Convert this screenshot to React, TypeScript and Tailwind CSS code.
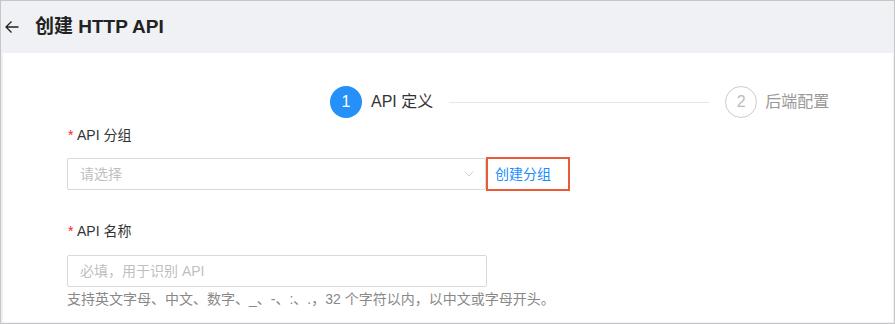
import { ChevronDown } from "lucide-react";

const FONT = { fontFamily: '"Liberation Sans","Noto Sans CJK SC",sans-serif' };

function StepDot({ n, active }: { n: number; active?: boolean }) {
  return (
    <div
      className={`w-8 h-8 rounded-full flex items-center justify-center text-[16px] ${
        active ? "bg-[#2590f8] text-white" : "border border-[#cccccc] text-[#bbbbbb]"
      }`}
    >
      {n}
    </div>
  );
}

function Label({ text }: { text: string }) {
  return (
    <div className="flex items-center h-5 text-[14px] text-[#333]">
      <span className="text-[#f5222d] w-[10px] pl-[1px]">*</span>
      <span>{text}</span>
    </div>
  );
}

export default function App() {
  return (
    <div
      className="w-[895px] h-[324px] border border-[#c6c6c6] bg-[#eff1f5] flex flex-col overflow-hidden"
      style={FONT}
    >
      {/* Header */}
      <div className="h-[52px] shrink-0 flex items-center pl-[4px]">
        <svg width="14" height="14" viewBox="0 0 14 14" fill="none" stroke="#222" strokeWidth="1.3">
          <path d="M13.5 7H1M6.5 1.5L1 7L6.5 12.5" />
        </svg>
        <h1 className="ml-[16px] text-[19px] font-bold text-[#222]">创建 HTTP API</h1>
      </div>

      {/* Card */}
      <div className="flex-1 bg-white ml-[2px] mr-[1px] mb-[1px] pt-[33px]">
        {/* Steps */}
        <div className="flex items-center pl-[327px]">
          <StepDot n={1} active />
          <span className="ml-[9px] text-[16px] text-[#333]">API 定义</span>
          <div className="ml-[16px] w-[260px] h-px bg-[#e8e8e8]" />
          <div className="ml-[16px]">
            <StepDot n={2} />
          </div>
          <span className="ml-[8px] text-[16px] text-[#999]">后端配置</span>
        </div>

        {/* Form */}
        <div className="pl-[64px] mt-[7px]">
          <Label text="API 分组" />
          <div className="mt-[12px] flex items-center">
            <div className="w-[419px] h-[32px] border border-[#d9d9d9] rounded-[2px] flex items-center justify-between pl-[12px] pr-[8px]">
              <span className="text-[14px] text-[#bfbfbf]">请选择</span>
              <ChevronDown size={16} strokeWidth={1} className="text-[#bbbbbb]" />
            </div>
            <div className="w-[84px] h-[34px] border-2 border-[#ea5a35] flex items-center pl-[7px]">
              <span className="text-[14px] text-[#1a8cff]">创建分组</span>
            </div>
          </div>

          <div className="mt-[30px]">
            <Label text="API 名称" />
          </div>
          <div className="mt-[14px] w-[420px] h-[32px] border border-[#d9d9d9] rounded-[2px] flex items-center px-[12px]">
            <span className="text-[14px] text-[#bfbfbf]">必填，用于识别 API</span>
          </div>
          <p className="mt-[2px] text-[14px] leading-[20px] text-[#888]">
            支持英文字母、中文、数字、_、-、:、.，32 个字符以内，以中文或字母开头。
          </p>
        </div>
      </div>
    </div>
  );
}
